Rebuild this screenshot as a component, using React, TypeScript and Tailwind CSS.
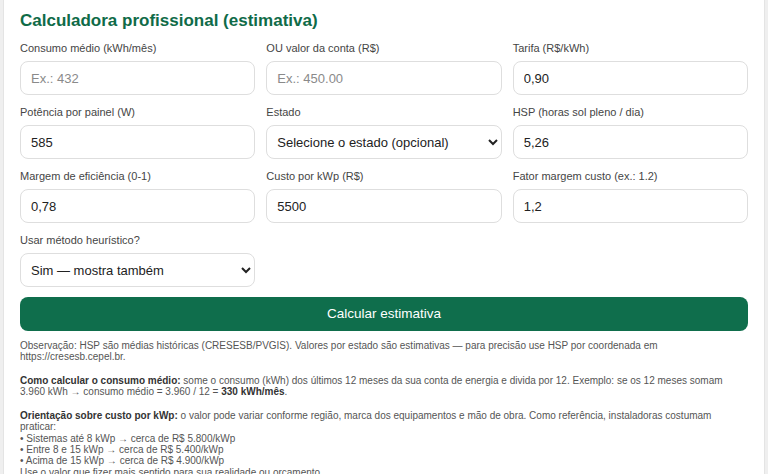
import { useState } from 'react';

const FIELDS = [
  { id: 'consumo', label: 'Consumo médio (kWh/mês)', placeholder: 'Ex.: 432', value: '' },
  { id: 'conta', label: 'OU valor da conta (R$)', placeholder: 'Ex.: 450.00', value: '' },
  { id: 'tarifa', label: 'Tarifa (R$/kWh)', placeholder: '', value: '0,90' },
  { id: 'potencia', label: 'Potência por painel (W)', placeholder: '', value: '585' },
  { id: 'estado', label: 'Estado', select: ['Selecione o estado (opcional)'] },
  { id: 'hsp', label: 'HSP (horas sol pleno / dia)', placeholder: '', value: '5,26' },
  { id: 'margem', label: 'Margem de eficiência (0-1)', placeholder: '', value: '0,78' },
  { id: 'custo', label: 'Custo por kWp (R$)', placeholder: '', value: '5500' },
  { id: 'fator', label: 'Fator margem custo (ex.: 1.2)', placeholder: '', value: '1,2' },
  { id: 'heuristico', label: 'Usar método heurístico?', select: ['Sim — mostra também', 'Não'] },
];

export default function App() {
  const [values, setValues] = useState<Record<string, string>>(
    Object.fromEntries(FIELDS.map((f) => [f.id, f.value ?? '']))
  );

  const baseClass =
    'w-full h-[34px] rounded-lg border border-[#dedede] bg-white text-[13px] text-[#222] placeholder-[#8a8a8a] outline-none';

  return (
    <div className="min-h-screen bg-[#efefef] px-[3px]" style={{ fontFamily: '"Liberation Sans", Arial, sans-serif' }}>
      <div className="min-h-screen bg-white border-x border-[#e4e4e4] px-4 pt-[11px] pb-6">
        <h2 className="text-[17px] leading-[20px] font-bold text-[#0f6b48] mb-[10px]">
          Calculadora profissional (estimativa)
        </h2>

        <div className="grid grid-cols-3 gap-x-[11px] gap-y-[10px]">
          {FIELDS.map((f) => (
            <div key={f.id}>
              <label htmlFor={f.id} className="block text-[11px] leading-[14px] text-[#454545] mb-[6px]">
                {f.label}
              </label>
              {f.select ? (
                <select
                  id={f.id}
                  value={values[f.id]}
                  onChange={(e) => setValues({ ...values, [f.id]: e.target.value })}
                  className={baseClass + ' pl-[6px] pr-[11px]'}
                >
                  {f.select.map((o) => (
                    <option key={o}>{o}</option>
                  ))}
                </select>
              ) : (
                <input
                  id={f.id}
                  type="text"
                  value={values[f.id]}
                  placeholder={f.placeholder}
                  onChange={(e) => setValues({ ...values, [f.id]: e.target.value })}
                  className={baseClass + ' px-[10px]'}
                />
              )}
            </div>
          ))}
        </div>

        <button
          type="button"
          className="mt-[10px] w-full h-[34px] rounded-lg bg-[#0f6e4c] text-white text-[13.5px]"
        >
          Calcular estimativa
        </button>

        {/* notas */}
        <div className="mt-[9px] text-[10px] leading-[11.3px] text-[#555]">
          <p>
            Observação: HSP são médias históricas (CRESESB/PVGIS). Valores por estado são estimativas — para precisão use
            HSP por coordenada em https://cresesb.cepel.br.
          </p>
          <p className="mt-[12.5px]">
            <b className="text-[#333]">Como calcular o consumo médio:</b> some o consumo (kWh) dos últimos 12 meses da
            sua conta de energia e divida por 12. Exemplo: se os 12 meses somam 3.960 kWh → consumo médio = 3.960 / 12 ={' '}
            <b className="text-[#333]">330 kWh/mês</b>.
          </p>
          <p className="mt-[12.5px]">
            <b className="text-[#333]">Orientação sobre custo por kWp:</b> o valor pode variar conforme região, marca dos
            equipamentos e mão de obra. Como referência, instaladoras costumam praticar:
            <br />• Sistemas até 8 kWp → cerca de R$ 5.800/kWp
            <br />• Entre 8 e 15 kWp → cerca de R$ 5.400/kWp
            <br />• Acima de 15 kWp → cerca de R$ 4.900/kWp
            <br />
            Use o valor que fizer mais sentido para sua realidade ou orçamento.
          </p>
        </div>
      </div>
    </div>
  );
}
